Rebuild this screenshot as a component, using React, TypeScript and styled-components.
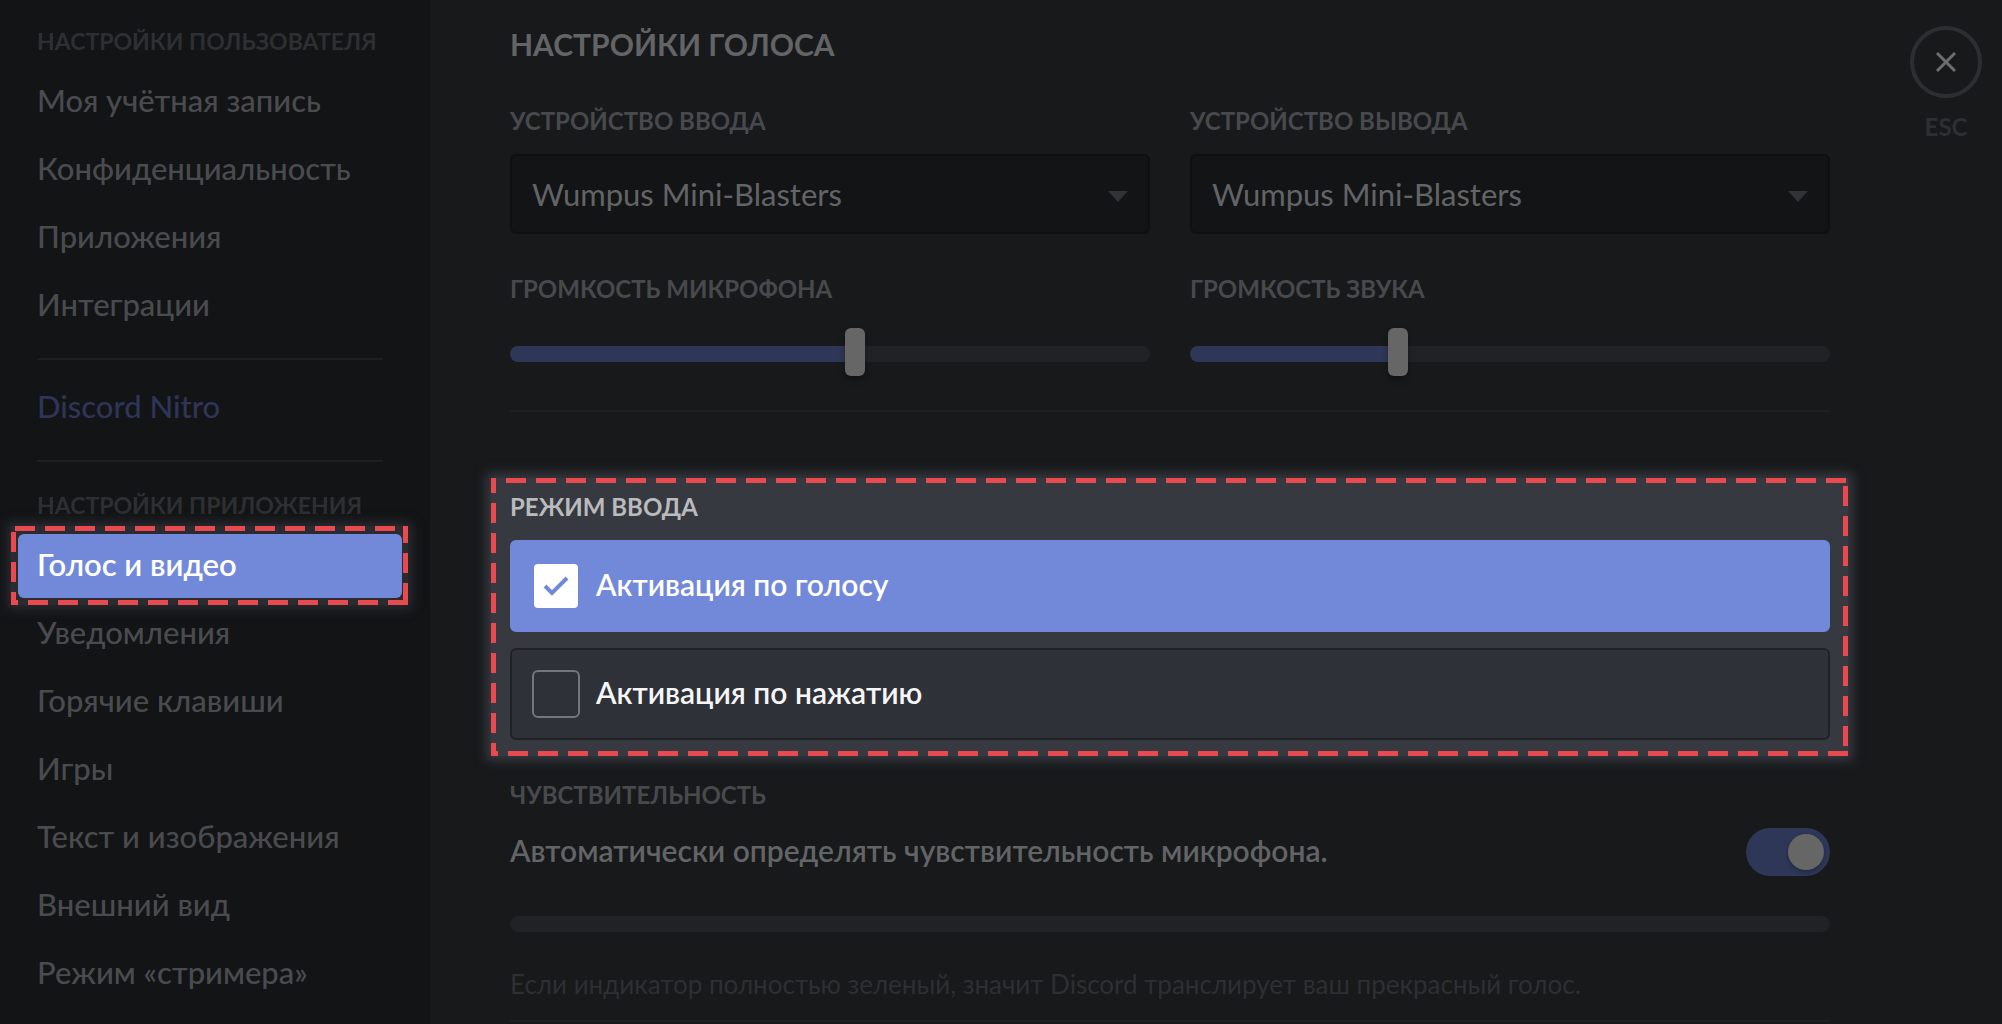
import React, { useState } from 'react';
import type { CSSProperties } from 'react';
import styled, { createGlobalStyle, css } from 'styled-components';

const color = {
  sidebar: '#131416',
  main: '#17191b',
  field: '#131416',
  line: '#1d1f21',
  track: '#212226',
  accentDim: '#2e3757',
  thumb: '#666666',
  textStrong: '#636466',
  textItem: '#4a4b4e',
  textLabel: '#48494d',
  textFaint: '#2e2f32',
  nitro: '#2e3557',
  accent: '#7289da',
  lit: '#36393f',
  litRow: '#2f3138',
  marker: '#e84a4f',
};

const GlobalStyle = createGlobalStyle`
  *, *::before, *::after { box-sizing: border-box; }
  body {
    margin: 0;
    background: ${color.main};
    font-family: Lato, 'Noto Sans', sans-serif;
  }
  h1, h2, ul, p { margin: 0; padding: 0; }
`;

interface MarkerProps {
  $top: number;
  $right: number;
  $bottom: number;
  $left: number;
}

/* Dashed marker: four strips of 20px dashes with 10px gaps, each with its own phase. */
const dashes = ({ $top, $right, $bottom, $left }: MarkerProps) => css`
  background:
    linear-gradient(90deg, ${color.marker} 20px, transparent 20px) ${$top}px 0 / 30px 5px repeat-x,
    linear-gradient(${color.marker} 20px, transparent 20px) 100% ${$right}px / 5px 30px repeat-y,
    linear-gradient(90deg, ${color.marker} 20px, transparent 20px) ${$bottom}px 100% / 30px 5px repeat-x,
    linear-gradient(${color.marker} 20px, transparent 20px) 0 ${$left}px / 5px 30px repeat-y;
`;

const Page = styled.div`
  display: flex;
  min-height: 100vh;
`;

const Sidebar = styled.nav`
  flex: 0 0 430px;
  padding: 14px 28px 0 18px;
  background: ${color.sidebar};
`;

const GroupTitle = styled.h2`
  padding: 10px 19px 0;
  margin-bottom: 12px;
  font-size: 23px;
  line-height: 34px;
  font-weight: 700;
  color: ${color.textFaint};
`;

const NavList = styled.ul`
  display: flex;
  flex-direction: column;
  gap: 4px;
  list-style: none;
`;

const NavLink = styled.a<{ $tint?: string }>`
  display: block;
  padding: 0 19px 4px;
  font-size: 31px;
  line-height: 60px;
  font-weight: 500;
  text-decoration: none;
  color: ${(p) => p.$tint ?? color.textItem};
`;

const ActiveLink = styled(NavLink)`
  position: relative;
  isolation: isolate;
  color: #fff;
  font-weight: 600;

  &::before {
    content: '';
    position: absolute;
    z-index: -1;
    inset: -8px -6px -7px -7px;
    box-shadow: 0 0 10px 4px #292b30;
    ${dashes({ $top: 4, $right: 27, $bottom: 17, $left: 6 })}
    background-color: #292b30;
  }

  &::after {
    content: '';
    position: absolute;
    z-index: -1;
    inset: 0;
    border-radius: 6px;
    background: ${color.accent};
  }
`;

const NavDivider = styled.hr`
  height: 2px;
  margin: 20px 19px 16px;
  border: 0;
  background: ${color.line};
`;

const Main = styled.main`
  display: flex;
  flex: 1;
  min-width: 0;
  gap: 80px;
  padding: 24px 20px 0 80px;
`;

const Content = styled.div`
  flex: 1;
  min-width: 0;
`;

const PageTitle = styled.h1`
  margin-bottom: 40px;
  font-size: 30px;
  line-height: 40px;
  font-weight: 700;
  color: ${color.textStrong};
`;

const FieldGrid = styled.div`
  display: grid;
  grid-template-columns: 1fr 1fr;
  gap: 38px 40px;
`;

const Field = styled.div<{ $gap: number }>`
  display: flex;
  flex-direction: column;
  gap: ${(p) => p.$gap}px;
`;

const labelText = css`
  font-size: 24px;
  line-height: 34px;
  font-weight: 700;
`;

const Label = styled.label`
  ${labelText}
  color: ${color.textLabel};
`;

const SectionTitle = styled.h2<{ $lit?: boolean }>`
  ${labelText}
  margin-bottom: 16px;
  color: ${(p) => (p.$lit ? '#b9bbbe' : color.textLabel)};
`;

const SelectBox = styled.div`
  display: grid;
  align-items: center;
  border: 2px solid #0f1012;
  border-radius: 6px;
  background: ${color.field};

  > * { grid-area: 1 / 1; }
  > svg { justify-self: end; margin: 4px 20px 0 0; pointer-events: none; }
`;

const Select = styled.select`
  appearance: none;
  width: 100%;
  height: 76px;
  padding: 0 60px 0 20px;
  border: 0;
  background: transparent;
  color: ${color.textStrong};
  font: 400 31px/40px Lato, 'Noto Sans', sans-serif;
`;

const Range = styled.input`
  appearance: none;
  width: 100%;
  height: 48px;
  margin: 0;
  background: transparent;

  &::-webkit-slider-runnable-track {
    height: 16px;
    border-radius: 8px;
    background: linear-gradient(90deg, ${color.accentDim} var(--fill), ${color.track} var(--fill));
  }
  &::-webkit-slider-thumb {
    appearance: none;
    width: 20px;
    height: 48px;
    margin-top: -18px;
    border-radius: 6px;
    background: ${color.thumb};
    box-shadow: 0 4px 6px rgba(0, 0, 0, 0.3);
  }
`;

const Divider = styled.hr<{ $top: number }>`
  height: 2px;
  margin: ${(p) => p.$top}px 0 0;
  border: 0;
  background: ${color.line};
`;

const InputMode = styled.section`
  margin: 66px -18px 22px -19px;
  padding: 12px 18px 16px 19px;
  box-shadow: 0 0 10px 5px ${color.lit};
  ${dashes({ $top: 15, $right: 8, $bottom: 17, $left: 25 })}
  background-color: ${color.lit};
`;

const Options = styled.div`
  display: grid;
  gap: 16px;
`;

const Option = styled.label<{ $on: boolean }>`
  display: flex;
  align-items: center;
  gap: 16px;
  height: 92px;
  padding: 0 20px;
  border: 2px solid ${(p) => (p.$on ? color.accent : '#202225')};
  border-radius: 6px;
  background: ${(p) => (p.$on ? color.accent : color.litRow)};
  color: ${(p) => (p.$on ? '#fff' : '#f6f6f7')};
`;

const rowText = css`
  padding-bottom: 4px;
  font-size: 30px;
  line-height: 40px;
  font-weight: 600;
`;

const OptionText = styled.span`
  ${rowText}
`;

const TickBox = styled.span`
  display: grid;
  place-items: center;

  > * { grid-area: 1 / 1; }
  > svg { pointer-events: none; }
`;

const Tick = styled.input`
  appearance: none;
  width: 48px;
  height: 48px;
  margin: 0;
  border: 2px solid #72767d;
  border-radius: 6px;

  &:checked {
    border-color: ${color.accent};
    background: #fff;
  }
`;

const ToggleRow = styled.div`
  display: flex;
  align-items: center;
  justify-content: space-between;
  margin-bottom: 40px;
`;

const ToggleLabel = styled.label`
  ${rowText}
  color: ${color.textStrong};
`;

const Toggle = styled.input`
  appearance: none;
  display: flex;
  flex: none;
  align-items: center;
  width: 84px;
  height: 48px;
  margin: 0;
  padding: 0 6px;
  border-radius: 24px;
  background: ${color.track};

  &::before {
    content: '';
    width: 36px;
    height: 36px;
    border-radius: 50%;
    background: ${color.thumb};
    box-shadow: 0 2px 4px rgba(0, 0, 0, 0.3);
  }
  &:checked {
    justify-content: flex-end;
    background: ${color.accentDim};
  }
`;

const LevelBar = styled.div`
  height: 16px;
  margin-bottom: 36px;
  border-radius: 8px;
  background: ${color.track};
`;

const Hint = styled.p`
  font-size: 26px;
  line-height: 32px;
  color: ${color.textFaint};
`;

const CloseColumn = styled.div`
  display: flex;
  flex: 0 0 72px;
  flex-direction: column;
  align-items: center;
  gap: 12px;
  padding-top: 2px;
  font-size: 24px;
  line-height: 34px;
  font-weight: 700;
  color: ${color.textFaint};
`;

const CloseButton = styled.button`
  display: grid;
  place-items: center;
  width: 72px;
  height: 72px;
  padding: 0;
  border: 4px solid #2d2e31;
  border-radius: 50%;
  background: transparent;
`;

const devices = ['Wumpus Mini-Blasters'];

function DeviceField({ id, label }: { id: string; label: string }) {
  return (
    <Field $gap={16}>
      <Label htmlFor={id}>{label}</Label>
      <SelectBox>
        <Select id={id}>
          {devices.map((d) => (
            <option key={d}>{d}</option>
          ))}
        </Select>
        <svg width="20" height="11" viewBox="0 0 20 11" aria-hidden="true">
          <path d="M0 0H20L10 11Z" fill="#313235" />
        </svg>
      </SelectBox>
    </Field>
  );
}

function VolumeField({ id, label, initial }: { id: string; label: string; initial: number }) {
  const [value, setValue] = useState(initial);
  return (
    <Field $gap={24}>
      <Label htmlFor={id}>{label}</Label>
      <Range
        id={id}
        type="range"
        min={0}
        max={100}
        value={value}
        onChange={(e) => setValue(Number(e.target.value))}
        style={{ '--fill': `${value}%` } as CSSProperties}
      />
    </Field>
  );
}

const modes = [
  { id: 'voice', label: 'Активация по голосу' },
  { id: 'push', label: 'Активация по нажатию' },
];

const userLinks = ['Моя учётная запись', 'Конфиденциальность', 'Приложения', 'Интеграции'];
const appLinks = [
  'Голос и видео',
  'Уведомления',
  'Горячие клавиши',
  'Игры',
  'Текст и изображения',
  'Внешний вид',
  'Режим «стримера»',
];

export default function App() {
  const [mode, setMode] = useState('voice');
  const [auto, setAuto] = useState(true);

  return (
    <Page>
      <GlobalStyle />
      <Sidebar>
        <GroupTitle>НАСТРОЙКИ ПОЛЬЗОВАТЕЛЯ</GroupTitle>
        <NavList>
          {userLinks.map((t) => (
            <li key={t}>
              <NavLink href="#">{t}</NavLink>
            </li>
          ))}
        </NavList>
        <NavDivider />
        <NavLink href="#" $tint={color.nitro}>Discord Nitro</NavLink>
        <NavDivider />
        <GroupTitle>НАСТРОЙКИ ПРИЛОЖЕНИЯ</GroupTitle>
        <NavList>
          {appLinks.map((t, i) => (
            <li key={t}>
              {i === 0 ? (
                <ActiveLink href="#" aria-current="page">{t}</ActiveLink>
              ) : (
                <NavLink href="#">{t}</NavLink>
              )}
            </li>
          ))}
        </NavList>
      </Sidebar>

      <Main>
        <Content>
          <PageTitle>НАСТРОЙКИ ГОЛОСА</PageTitle>
          <FieldGrid>
            <DeviceField id="input-device" label="УСТРОЙСТВО ВВОДА" />
            <DeviceField id="output-device" label="УСТРОЙСТВО ВЫВОДА" />
            <VolumeField id="mic-volume" label="ГРОМКОСТЬ МИКРОФОНА" initial={54} />
            <VolumeField id="sound-volume" label="ГРОМКОСТЬ ЗВУКА" initial={32} />
          </FieldGrid>
          <Divider $top={32} />

          <InputMode>
            <SectionTitle $lit>РЕЖИМ ВВОДА</SectionTitle>
            <Options>
              {modes.map((m) => (
                <Option key={m.id} $on={mode === m.id}>
                  <TickBox>
                    <Tick type="checkbox" checked={mode === m.id} onChange={() => setMode(m.id)} />
                    {mode === m.id && (
                      <svg width="26" height="20" viewBox="0 0 26 20" fill="none" aria-hidden="true">
                        <path d="M2 10L9 17L24 2" stroke={color.accent} strokeWidth="4" />
                      </svg>
                    )}
                  </TickBox>
                  <OptionText>{m.label}</OptionText>
                </Option>
              ))}
            </Options>
          </InputMode>

          <SectionTitle>ЧУВСТВИТЕЛЬНОСТЬ</SectionTitle>
          <ToggleRow>
            <ToggleLabel htmlFor="auto">Автоматически определять чувствительность микрофона.</ToggleLabel>
            <Toggle id="auto" type="checkbox" checked={auto} onChange={(e) => setAuto(e.target.checked)} />
          </ToggleRow>
          <LevelBar />
          <Hint>Если индикатор полностью зеленый, значит Discord транслирует ваш прекрасный голос.</Hint>
          <Divider $top={20} />
        </Content>

        <CloseColumn>
          <CloseButton aria-label="Закрыть">
            <svg width="22" height="22" viewBox="0 0 22 22" aria-hidden="true">
              <path d="M2 2L20 20M20 2L2 20" stroke="#6c6d6f" strokeWidth="3" />
            </svg>
          </CloseButton>
          ESC
        </CloseColumn>
      </Main>
    </Page>
  );
}
